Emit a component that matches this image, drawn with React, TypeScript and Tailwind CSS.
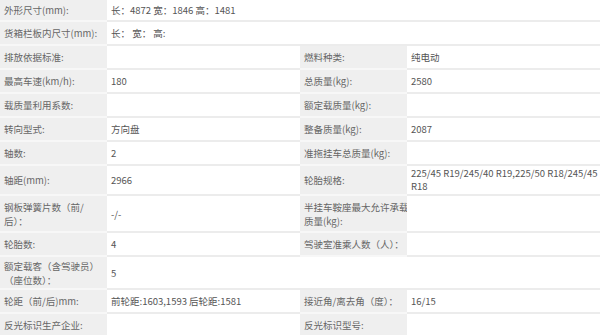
import React from 'react'

// ── Spec table rows ──────────────────────────────────────────────────

type Cell = React.ReactNode

interface Row {
  h: string
  full?: boolean
  l1: Cell
  v1?: Cell
  l2?: Cell
  v2?: Cell
}

const rows: Row[] = [
  { h: 'h-[22px]', full: true, l1: '外形尺寸(mm):', v1: '长：4872 宽：1846 高：1481' },
  { h: 'h-[24px]', full: true, l1: '货箱栏板内尺寸(mm):', v1: '长： 宽： 高:' },
  { h: 'h-[24px]', l1: '排放依据标准:', v1: '', l2: '燃料种类:', v2: '纯电动' },
  { h: 'h-[24px]', l1: '最高车速(km/h):', v1: '180', l2: '总质量(kg):', v2: '2580' },
  { h: 'h-[24px]', l1: '载质量利用系数:', v1: '', l2: '额定载质量(kg):', v2: '' },
  { h: 'h-[24px]', l1: '转向型式:', v1: '方向盘', l2: '整备质量(kg):', v2: '2087' },
  { h: 'h-[24px]', l1: '轴数:', v1: '2', l2: '准拖挂车总质量(kg):', v2: '' },
  {
    h: 'h-[30px]', l1: '轴距(mm):', v1: '2966', l2: '轮胎规格:',
    v2: <span className="leading-[13px]">225/45 R19/245/40 R19,225/50 R18/245/45<br />R18</span>,
  },
  {
    h: 'h-[37px]', l1: <>钢板弹簧片数（前/<br />后）：</>, v1: '-/-',
    l2: <>半挂车鞍座最大允许承载<br />质量(kg):</>, v2: '',
  },
  { h: 'h-[24px]', l1: '轮胎数:', v1: '4', l2: '驾驶室准乘人数（人）：', v2: '' },
  { h: 'h-[33px]', full: true, l1: <>额定载客（含驾驶员）<br />（座位数）：</>, v1: '5' },
  { h: 'h-[24px]', l1: '轮距（前/后)mm:', v1: '前轮距:1603,1593 后轮距:1581', l2: '接近角/离去角（度）：', v2: '16/15' },
  { h: 'h-[24px]', l1: '反光标识生产企业:', v1: '', l2: '反光标识型号:', v2: '' },
]

const labelCls = 'flex items-center pl-1 bg-[#efefef] text-[#666] border-b-2 border-[#f7f7f7] whitespace-nowrap'
const valueCls = 'flex items-center pl-1 bg-white text-[#555] border-b-2 border-[#ececec] whitespace-nowrap'

export default function App() {
  return (
    <div className="w-[600px] h-[335px] overflow-hidden bg-white text-[9.5px] leading-[14px] font-['Noto_Sans_CJK_SC','Noto_Sans',sans-serif]">
      {rows.map((r, i) => (
        <div key={i} className={`grid grid-cols-[107px_193px_107px_193px] ${r.h}`}>
          <div className={labelCls}>
            <span>{r.l1}</span>
          </div>
          {r.full ? (
            <div className={`${valueCls} col-span-3`}>
              <span>{r.v1}</span>
            </div>
          ) : (
            <>
              <div className={valueCls}>
                <span>{r.v1}</span>
              </div>
              <div className={labelCls}>
                <span>{r.l2}</span>
              </div>
              <div className={valueCls}>{r.v2}</div>
            </>
          )}
        </div>
      ))}
    </div>
  )
}
